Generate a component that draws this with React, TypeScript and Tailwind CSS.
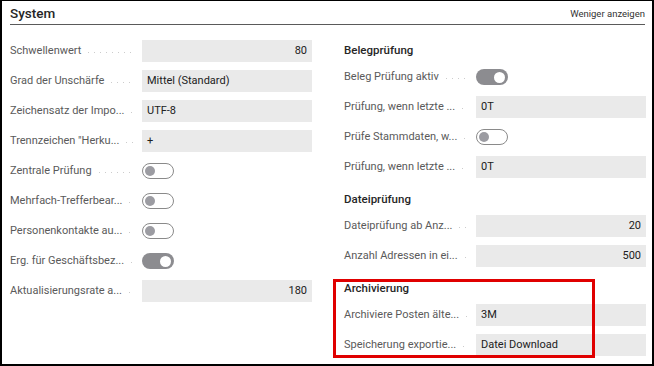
import React from "react";

type Row =
  | { kind: "field"; label: string; value: string; align?: "left" | "right" }
  | { kind: "toggle"; label: string; on: boolean }
  | { kind: "heading"; label: string; first?: boolean };

const left: Row[] = [
  { kind: "field", label: "Schwellenwert", value: "80", align: "right" },
  { kind: "field", label: "Grad der Unschärfe", value: "Mittel (Standard)" },
  { kind: "field", label: "Zeichensatz der Impo...", value: "UTF-8" },
  { kind: "field", label: "Trennzeichen \"Herku...", value: "+" },
  { kind: "toggle", label: "Zentrale Prüfung", on: false },
  { kind: "toggle", label: "Mehrfach-Trefferbear...", on: false },
  { kind: "toggle", label: "Personenkontakte au...", on: false },
  { kind: "toggle", label: "Erg. für Geschäftsbez...", on: true },
  { kind: "field", label: "Aktualisierungsrate a...", value: "180", align: "right" },
];

const right: Row[] = [
  { kind: "heading", label: "Belegprüfung", first: true },
  { kind: "toggle", label: "Beleg Prüfung aktiv", on: true },
  { kind: "field", label: "Prüfung, wenn letzte ...", value: "0T" },
  { kind: "toggle", label: "Prüfe Stammdaten, w...", on: false },
  { kind: "field", label: "Prüfung, wenn letzte ...", value: "0T" },
  { kind: "heading", label: "Dateiprüfung" },
  { kind: "field", label: "Dateiprüfung ab Anz...", value: "20", align: "right" },
  { kind: "field", label: "Anzahl Adressen in ei...", value: "500", align: "right" },
  { kind: "heading", label: "Archivierung" },
  { kind: "field", label: "Archiviere Posten älte...", value: "3M" },
  { kind: "field", label: "Speicherung exportie...", value: "Datei Download" },
];

function Label({ text }: { text: string }) {
  return (
    <div className="w-[132px] shrink-0 flex items-center pr-[9px]">
      <span className="whitespace-nowrap text-[#5a5a5a]">{text}</span>
      <span className="flex-1 ml-[7px] mt-[3px] h-px bg-[linear-gradient(to_right,#cccccc_1px,transparent_1px)] bg-[length:6px_1px] bg-repeat-x" />
    </div>
  );
}

function Toggle({ on }: { on: boolean }) {
  return on ? (
    <div className="w-[32px] h-[16px] rounded-full bg-[#8c8c90] flex items-center justify-end pr-[3px]">
      <div className="w-[11px] h-[11px] rounded-full bg-white" />
    </div>
  ) : (
    <div className="w-[32px] h-[16px] rounded-full border border-[#8a8a8a] bg-white flex items-center pl-[2px]">
      <div className="w-[10px] h-[10px] rounded-full bg-[#9c9ca2]" />
    </div>
  );
}

function RowView({ row }: { row: Row }) {
  if (row.kind === "heading") {
    return (
      <div
        className={
          (row.first ? "h-[27px] " : "h-[29px] ") +
          "flex items-end pb-[3px] font-medium text-[11.5px] text-[#262626] leading-[17px]"
        }
      >
        {row.label}
      </div>
    );
  }
  return (
    <div className="h-[30px] flex items-center">
      <Label text={row.label} />
      {row.kind === "field" ? (
        <div
          className={
            "w-[170px] h-[22px] bg-[#eaeaea] px-[5px] flex items-center text-[#212121] " +
            (row.align === "right" ? "justify-end" : "justify-start")
          }
        >
          {row.value}
        </div>
      ) : (
        <div className="w-[170px] flex items-center">
          <Toggle on={row.on} />
        </div>
      )}
    </div>
  );
}

export default function App() {
  return (
    <div
      className="relative w-[654px] h-[366px] bg-white border-black border-l-2 border-r-2 border-b-2 border-t text-[11px] overflow-hidden"
      style={{ fontFamily: 'Roboto, "Open Sans", sans-serif' }}
    >
      <div className="ml-[8px] mr-[7px] h-[24px] border-b border-[#5a5a5a] flex items-center justify-between pt-[3px]">
        <span className="text-[13.5px] font-medium text-[#262626] leading-none">System</span>
        <span className="text-[9.5px] text-[#333] leading-none">Weniger anzeigen</span>
      </div>
      <div className="flex ml-[8px] gap-[32px]">
        <div className="w-[302px] pt-[11px]">
          {left.map((r, i) => (
            <RowView key={i} row={r} />
          ))}
        </div>
        <div className="w-[302px] pt-[10px]">
          {right.map((r, i) => (
            <RowView key={i} row={r} />
          ))}
        </div>
      </div>
      <div className="absolute left-[331px] top-[278px] w-[262px] h-[79px] border-[3px] border-[#e00000]" />
    </div>
  );
}
